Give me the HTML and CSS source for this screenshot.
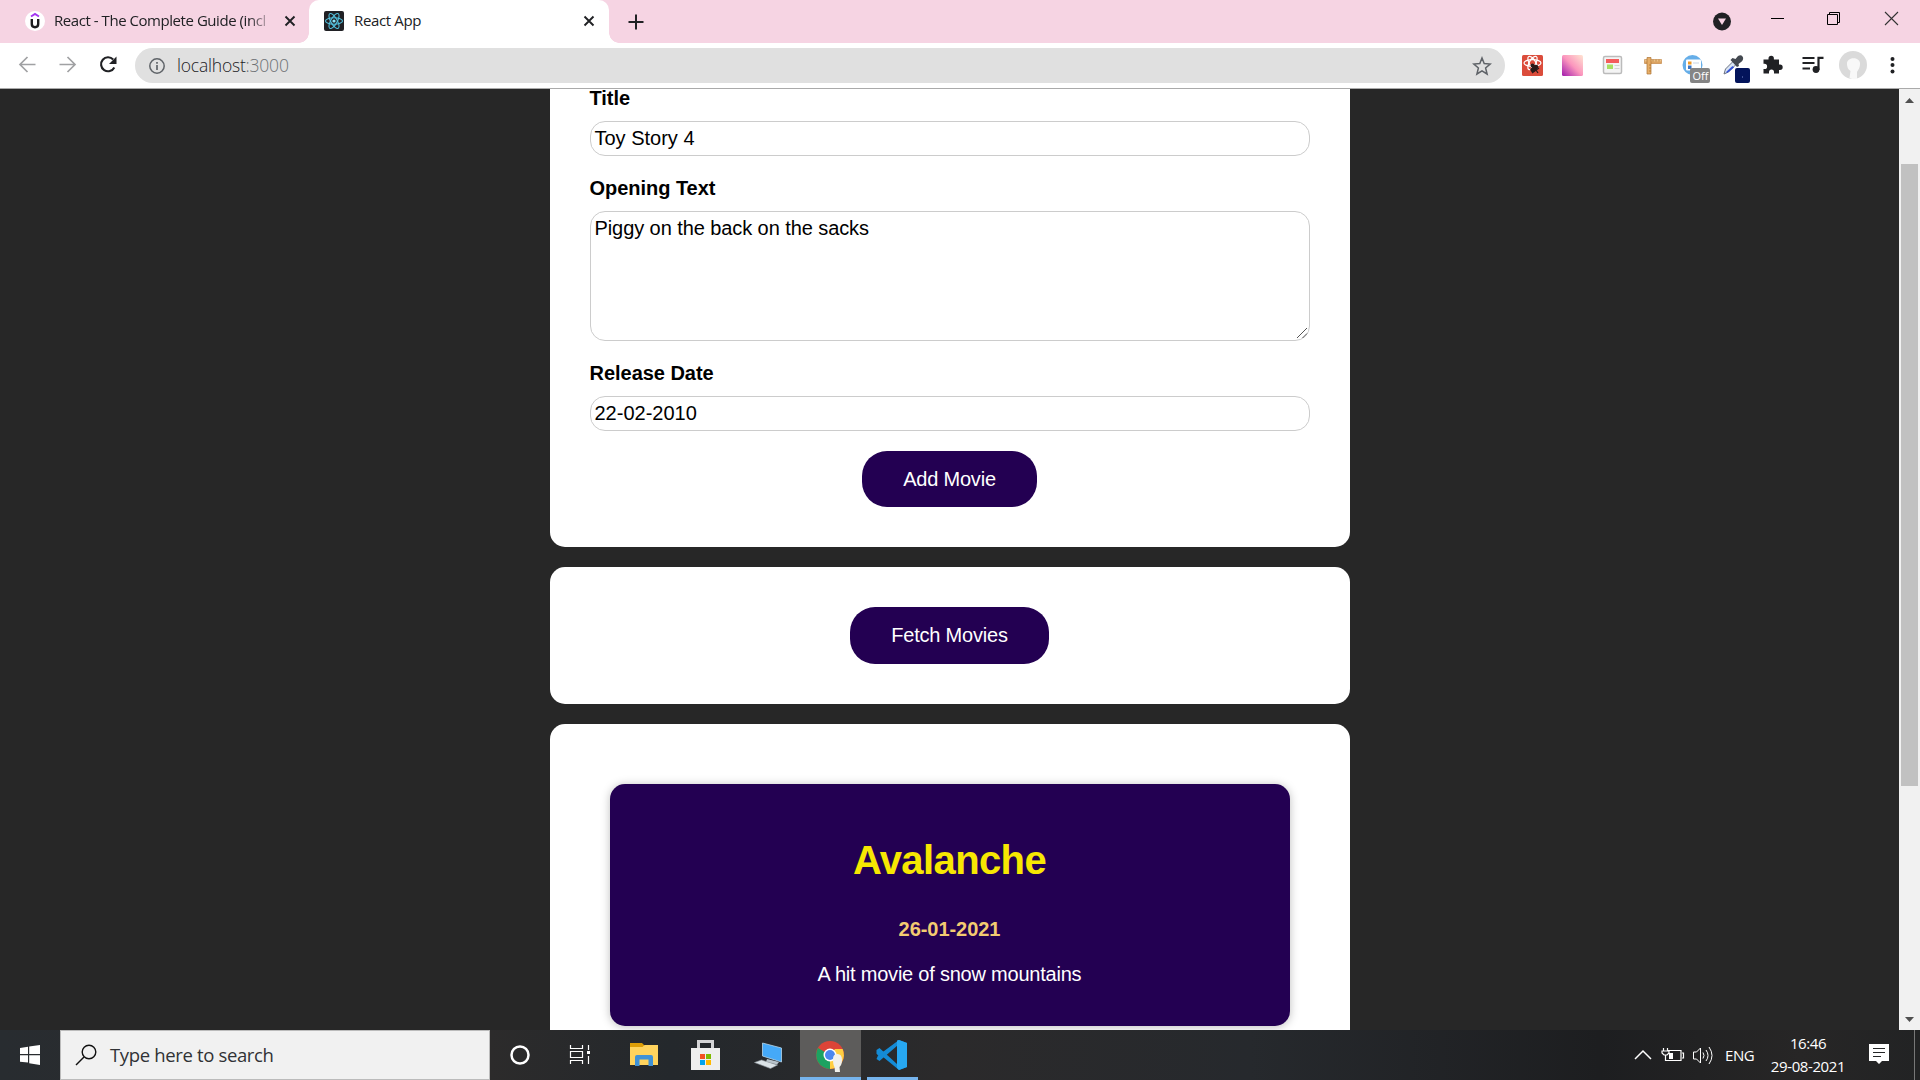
FILE: index.html
```html
<!DOCTYPE html>
<html lang="en">
<head>
<meta charset="utf-8">
<title>React App</title>
<link rel="stylesheet" href="styles.css">
</head>
<body>
<header class="tabs">
  <div class="tab tab-back">
    <svg class="fav" width="20" height="20" viewBox="0 0 20 20"><circle cx="10" cy="10" r="10" fill="#fff"/><path d="M6 5.500l4-2.600 4 2.600" fill="none" stroke="#a435f0" stroke-width="2"/><path d="M6.800 8v5q0 3.200 3.200 3.200t3.200-3.200V8" fill="none" stroke="#1c1d1f" stroke-width="2.400"/></svg>
    <span class="tab-title tab-fade">React - The Complete Guide (incl</span>
    <svg class="close" width="12" height="12" viewBox="0 0 12 12"><path d="M1.500 1.500l9 9M10.500 1.500l-9 9" stroke="#202124" stroke-width="1.900"/></svg>
  </div>
  <div class="tab tab-active">
    <svg class="fav" width="20" height="20" viewBox="0 0 20 20"><rect width="20" height="20" rx="2" fill="#202024"/><g fill="none" stroke="#53c1de" stroke-width="1.100"><ellipse cx="10" cy="10" rx="8.500" ry="3.200"/><ellipse cx="10" cy="10" rx="8.500" ry="3.200" transform="rotate(60 10 10)"/><ellipse cx="10" cy="10" rx="8.500" ry="3.200" transform="rotate(120 10 10)"/></g><circle cx="10" cy="10" r="1.600" fill="#8be4f7"/></svg>
    <span class="tab-title">React App</span>
    <svg class="close" width="12" height="12" viewBox="0 0 12 12"><path d="M1.500 1.500l9 9M10.500 1.500l-9 9" stroke="#202124" stroke-width="1.900"/></svg>
  </div>
  <svg class="plus" width="16" height="16" viewBox="0 0 16 16"><path d="M8 .5v15M.5 8h15" stroke="#202124" stroke-width="2"/></svg>
  <div class="window-controls">
    <svg width="200" height="43" viewBox="0 0 200 43"><circle cx="22" cy="21.500" r="9" fill="#202124"/><path d="M18 18.500h8l-4 6.500z" fill="#f6d4e3"/><path d="M71 18.500h13" stroke="#000"/><path d="M127.500 14.500h10v10h-10zM129.500 14v-1.500h10v10H138" fill="none" stroke="#000"/><path d="M185 12l13 13M198 12l-13 13" stroke="#333" stroke-width="1.100"/></svg>
  </div>
</header>
<div class="toolbar">
  <svg width="135" height="45" viewBox="0 0 135 45" fill="none"><path d="M35.500 21.500H20.500M27.500 14L20 21.500l7.500 7.500M59.500 21.500h15M67.500 14l7.500 7.500-7.500 7.500" stroke="#a0a1a3" stroke-width="1.700"/><path d="M113.200 16.500A7 7 0 1 0 114.300 24.500" stroke="#202124" stroke-width="2.100"/><path d="M116.500 13.500v7.500H109z" fill="#202124"/></svg>
  <div class="address">
    <svg width="18" height="18" viewBox="0 0 18 18"><circle cx="9" cy="9" r="7.200" fill="none" stroke="#5f6368" stroke-width="1.500"/><path d="M9 8v5M9 5v1.800" stroke="#5f6368" stroke-width="1.700"/></svg>
    <span class="url">localhost<span class="port">:3000</span></span>
    <svg class="star" width="20" height="20" viewBox="0 0 20 20"><path d="M10 2l2.200 5.600 6 .5-4.600 3.900 1.500 6L10 14.800 4.900 18l1.500-6L1.800 8.100l6-.5z" fill="none" stroke="#5f6368" stroke-width="1.500"/></svg>
  </div>
  <svg class="extensions" width="415" height="45" viewBox="0 0 415 45">
    <defs>
      <linearGradient id="grad" x1="0" y1="1" x2="1" y2="0"><stop stop-color="#a01aad"/><stop offset=".5" stop-color="#fb96bd"/><stop offset="1" stop-color="#ffe5d2"/></linearGradient>
      <linearGradient id="wood" x2="0" y2="1"><stop stop-color="#f5d09a"/><stop offset="1" stop-color="#d4944e"/></linearGradient>
    </defs>
    <rect x="17" y="12" width="21" height="21" rx="1.500" fill="#db4c3b"/>
    <g fill="none" stroke="#fff" stroke-width="1.200"><ellipse cx="27.500" cy="20" rx="8.500" ry="3.300"/><ellipse cx="27.500" cy="20" rx="7.500" ry="3.200" transform="rotate(60 27.500 20)"/><ellipse cx="27.500" cy="20" rx="7.500" ry="3.200" transform="rotate(120 27.500 20)"/></g>
    <ellipse cx="29.500" cy="25.500" rx="2.600" ry="4.500" transform="rotate(45 29.500 25.500)" fill="#2a1b1a"/><circle cx="27.500" cy="22.500" r="2" fill="#2a1b1a"/><path d="M25.500 27l5-5M27 30l7-5M29 24l4 6" stroke="#2a1b1a" stroke-width="1.300"/>
    <rect x="57" y="12" width="21" height="21" rx="1.500" fill="url(#grad)"/>
    <rect x="98.500" y="13.500" width="18" height="17" rx="1.500" fill="#f4f4f4" stroke="#bbb" stroke-width="1.500"/><path d="M101 16h13v4h-13z" fill="#f45c5c"/><path d="M102 21.500h6V26h-6z" fill="#a8df62"/><path d="M109.500 22.500h5m-5 3h5" stroke="#d4d4d4"/>
    <path d="M139.500 16.500h17v4h-17z" fill="url(#wood)" stroke="#bd7e3a" stroke-width=".6"/><path d="M142 14.500h4V31h-4z" fill="#e6ae68" stroke="#ad7435" stroke-width=".7"/><path d="M148 16.500v2m3-2v2m3-2v2M144 22h2m-2 3h2m-2 3h2" stroke="#a3651f" stroke-width=".6"/>
    <circle cx="187.500" cy="22" r="10" fill="#66aee8"/><rect x="181" y="16.500" width="15" height="11" rx="1" fill="#fff"/><path d="M183 18.500h3.500v3H183z" fill="#f09a27"/><path d="M183 22.500h3.500V26H183z" fill="#3c75c4"/><path d="M188 20h6" stroke="#c8d5e4"/><rect x="185" y="25" width="20" height="15" rx="2" fill="#858585"/><text class="off" x="187.500" y="37">Off</text>
    <path d="M219 31l1.500-5 8-8 3 3-8 8z" fill="#d9e5f4" stroke="#6b7282"/><path d="M220.500 29.500l7-6.500 1.500 1.500-6 5z" fill="#3554d8"/><path d="M225.500 17l2-2 3 1 2.500-3q3-1.500 4.500.5t-.5 4.700L233.500 21l.5 2-2 1z" fill="#444950"/><rect x="230" y="25" width="15" height="15" rx="2" fill="#03145b"/><path d="M237 34h1" stroke="#7a8acc"/>
    <path d="M258.500 16.500h5v-1a2.700 2.700 0 0 1 5.400 0v1h5.100v5h1a2.700 2.700 0 0 1 0 5.400h-1V30.500h-5V29a2.500 2.500 0 0 0-5 0v1.500h-5.500V26h1a2.600 2.600 0 0 0 0-5.200h-1z" fill="#202124"/>
    <path d="M297.500 15h12M297.500 20h12M297.500 25.500h7.500" stroke="#202124" stroke-width="2"/><path d="M313.500 27V14.800h5" stroke="#202124" stroke-width="2.200" fill="none"/><circle cx="311" cy="26.500" r="3.400" fill="#202124"/>
    <circle cx="348" cy="22" r="14" fill="#dadada"/><path d="M344.500 35l1-7q-4-3-3.500-8c.6-6.500 12.500-6.500 13 0 .2 5-2 7-3 9v7q-4 .8-7.500-1z" fill="#f8f8f8"/>
    <g fill="#202124"><circle cx="387.500" cy="16" r="2"/><circle cx="387.500" cy="22" r="2"/><circle cx="387.500" cy="28.500" r="2"/></g>
  </svg>
</div>
<div class="viewport">
  <main class="page">
    <section class="card form-card">
      <div class="label">Title</div><div class="field">Toy Story 4</div>
      <div class="label">Opening Text</div>
      <div class="field area">Piggy on the back on the sacks<svg class="grip" width="12" height="12" viewBox="0 0 12 12"><path d="M1 11L11 1M6.500 11L11 6.500" stroke="#555"/></svg></div>
      <div class="label">Release Date</div><div class="field">22-02-2010</div>
      <button class="button add">Add Movie</button>
    </section>
    <section class="card fetch-card"><button class="button fetch">Fetch Movies</button></section>
    <section class="card list-card">
      <article class="movie"><h2>Avalanche</h2><h3>26-01-2021</h3><p>A hit movie of snow mountains</p></article>
    </section>
  </main>
  <div class="scrollbar">
    <svg width="21" height="24" viewBox="0 0 21 24"><path d="M6 13l4.500-5 4.500 5z" fill="#505050"/></svg>
    <div class="thumb"></div>
    <svg class="down" width="21" height="24" viewBox="0 0 21 24"><path d="M6 11l4.500 5 4.500-5z" fill="#505050"/></svg>
  </div>
</div>
<footer class="taskbar">
  <div class="start"><svg width="20" height="20" viewBox="0 0 20 20"><path d="M0 3l8-1.200V9H0zM9.200 1.500L20 0v9H9.200zM0 10.200h8v7.400L0 16.800zM9.200 10.200H20V20L9.200 18.200z" fill="#fff"/></svg></div>
  <div class="search"><svg width="22" height="22" viewBox="0 0 22 22"><circle cx="14" cy="8" r="6.800" fill="none" stroke="#111" stroke-width="1.400"/><path d="M9 13l-8 8" stroke="#111" stroke-width="1.400"/></svg><span>Type here to search</span></div>
  <svg class="apps" width="450" height="50" viewBox="0 0 450 50">
    <rect x="310" width="61" height="47" fill="#5d5c5b"/><path d="M310 47h61v3h-61zM377 47h51v3h-51z" fill="#76b4ed"/>
    <circle cx="30" cy="25" r="8.500" fill="none" stroke="#fff" stroke-width="2.500"/>
    <path d="M80.500 15v3.500h12V15M80.500 34v-3.500h12V34M80.500 21.500h12v6h-12zM98.500 15v5M98.500 26v8" fill="none" stroke="#fff" stroke-width="1.200"/><path d="M97 21h3v3h-3z" fill="#fff"/>
    <path d="M140 13h12l2 2v3h-14z" fill="#dd9d06"/><path d="M140 17h12.500l2-2H168v20h-28z" fill="#ffd35d"/><path d="M145 36V27q0-2 2-2h14q2 0 2 2v9h-4.500v-6.500h-9V36z" fill="#3f91d6"/>
    <path d="M208.500 19v-7.500h14V19" fill="none" stroke="#d4d4d6" stroke-width="3"/><path d="M201 18h29v22h-29z" fill="#eee"/><path d="M210 24h5v5h-5z" fill="#f25022"/><path d="M216 24h5v5h-5z" fill="#7fba00"/><path d="M210 30h5v5h-5z" fill="#00a4ef"/><path d="M216 30h5v5h-5z" fill="#ffb900"/>
    <path d="M272.500 13l19 5v14l-19-6z" fill="#45a9f8" stroke="#b8d6e8" stroke-width=".8"/><path d="M277 29l12 3-2 2.500-11-2.500z" fill="#b8c3ca"/><path d="M264.500 32.500l7-2.500 16 5-7 3.500z" fill="#dbe3e7" stroke="#91999f" stroke-width=".6"/>
    <circle cx="340" cy="25" r="14" fill="#dc4437"/><path d="M340 25l-12-7a14 14 0 0 0 12 21z" fill="#1ca261"/><path d="M340 25l5-6h7.600A14 14 0 0 1 340 39z" fill="#ffce42"/><circle cx="340" cy="25" r="6.500" fill="#fff"/><circle cx="340" cy="25" r="5" fill="#4b87ee"/><path d="M343 29q0-5 4.500-5t4.500 6q0 5-2.500 7l.5 5h-5l-.5-5q-1.500-2-1.500-8z" fill="#f1f1ed"/>
    <path d="M409 10l8 3v24l-8 3-19-15.500-2 .7-1.500-1.500V20l3-2 18 16.500v-19L389.500 31l-3-2 1.500-3.500z" fill="#148bd6"/><path d="M407 10.500l2-.5 8 3v24l-8 3-2-2z" fill="#27a8f2"/>
  </svg>
  <div class="tray">
    <svg width="84" height="50" viewBox="0 0 84 50" fill="none" stroke="#fff"><path d="M2 29l8-8 8 8" stroke-width="1.500"/><path d="M34 20.500h14v10H34M49 23h1.500v5H49M30.500 18v3M34.500 18v3M29 21h7v2l-2 2h-3l-2-2zM32.500 25v5.500H35" stroke-width="1.200"/><path d="M36 23h4v6h-4z" fill="#fff" stroke="none"/><path d="M60.500 22h3l4-4v15l-4-4h-3z"/><path d="M70 22.500q2 3 0 6M73 20q4 5.500 0 11M76 17q6 8.500 0 17"/></svg>
    <span class="lang">ENG</span><div class="clock"><span>16:46</span><span>29-08-2021</span></div>
    <svg class="notice" width="20" height="22" viewBox="0 0 20 22"><path d="M0 0h20v17h-7l-3 3-3-3H0z" fill="#fff"/><path d="M4 4.500h12M4 8.500h12M4 12.500h8" stroke="#242526" stroke-width="1.200"/></svg>
    <div class="show-desktop"></div>
  </div>
</footer>
</body>
</html>
```
FILE: styles.css
```css
* { box-sizing: border-box; }
body { margin: 0; width: 1920px; height: 1080px; overflow: hidden; display: flex; flex-direction: column; font-family: "Open Sans", "Noto Sans", sans-serif; }
svg { display: block; flex: none; }
.tabs { height: 43px; background: #f6d4e3; display: flex; align-items: center; }
.tab { height: 43px; display: flex; align-items: center; flex: none; }
.tab-back { width: 309px; padding: 0 13px 1px 25px; }
.tab-active { position: relative; width: 300px; padding: 0 14px 1px 15px; background: #fff; border-radius: 10px 10px 0 0; }
.tab-active::before, .tab-active::after { content: ""; position: absolute; bottom: 0; width: 10px; height: 10px; }
.tab-active::before { left: -10px; background: radial-gradient(circle at 0 0, transparent 9.5px, #fff 10px); }
.tab-active::after { right: -10px; background: radial-gradient(circle at 100% 0, transparent 9.5px, #fff 10px); }
.tab-title { margin: 0 0 2px 10px; font-size: 15px; letter-spacing: -0.35px; color: #202124; white-space: nowrap; }
.tab-fade { width: 216px; margin-left: 9px; overflow: hidden; letter-spacing: -0.45px; mask-image: linear-gradient(90deg, #000 90%, rgba(0,0,0,.15)); }
.close { margin-left: auto; }
.plus { margin-left: 19px; }
.window-controls { margin-left: auto; width: 220px; }
.toolbar { height: 46px; background: #fff; border-bottom: 1px solid #aaa; display: flex; align-items: flex-start; }
.address { width: 1370px; height: 35px; margin-top: 5px; padding: 0 13px; border-radius: 18px; background: #e0e0e0; display: flex; align-items: center; }
.url { margin: 0 0 1px 11px; font-size: 17.5px; font-weight: 300; letter-spacing: -0.2px; color: #202124; }
.port { color: #6d7074; }
.star { margin-left: auto; }
.off { font: 11px "Open Sans", sans-serif; fill: #fff; }
.viewport { height: 941px; display: flex; overflow: hidden; background: #272727; font-family: "Liberation Sans", Arial, sans-serif; }
.page { width: 1899px; display: flex; flex-direction: column; align-items: center; gap: 20px; }
.card { width: 800px; flex: none; background: #fff; border-radius: 15px; padding: 40px; }
.form-card { height: 458px; padding-top: 0; border-radius: 0 0 15px 15px; display: flex; flex-direction: column; }
.label { height: 25px; line-height: 25px; margin-bottom: 10px; font-size: 20px; font-weight: 700; letter-spacing: -0.03px; }
.label:first-child { height: 22px; line-height: 19px; }
.field { height: 35px; margin-bottom: 20px; border: 1px solid #ccc; border-radius: 15px; padding: 5px 4px; font-size: 20px; line-height: 23px; flex: none; }
.area { position: relative; height: 130px; letter-spacing: -0.08px; }
.grip { position: absolute; right: 1px; bottom: 1px; }
.button { height: 56px; padding: 0; border: 0; border-radius: 25px; background: #230052; color: #fff; font: 20px "Liberation Sans", Arial, sans-serif; letter-spacing: -0.2px; }
.add { width: 175px; margin: 0 auto; flex: none; }
.fetch-card { height: 137px; display: flex; justify-content: center; }
.fetch { width: 199px; height: 57px; }
.list-card { height: 400px; padding: 60px; }
.movie { height: 242px; border-radius: 15px; background: #230052; color: #fff; text-align: center; box-shadow: 0 1px 10px rgba(0,0,0,.26); padding-top: 53px; }
.movie h2 { margin: 0; font-size: 40px; line-height: 46px; letter-spacing: -0.6px; color: #f7e702; }
.movie h3 { margin: 35px 0 22px; font-size: 20px; line-height: 23px; letter-spacing: -0.05px; color: #f3cb71; }
.movie p { margin: 0; font-size: 20px; line-height: 23px; letter-spacing: -0.22px; }
.scrollbar { width: 21px; background: #f1f1f1; display: flex; flex-direction: column; padding-top: 1px; }
.thumb { width: 17px; height: 622px; margin: 50px 0 0 2px; background: #c1c1c1; }
.down { margin-top: auto; }
.taskbar { height: 50px; display: flex; color: #fff; background: linear-gradient(90deg, #282c30 0, #2c2b2b 490px, #24282c 670px, #2b2a2b 950px, #26292d 1250px, #1d1e20 1600px, #272626 1800px, #222324 1920px); }
.start { width: 60px; display: flex; align-items: center; justify-content: center; }
.search { width: 430px; border: 1px solid #bbb; background: #f1f1f1; color: #303235; display: flex; align-items: center; padding-left: 14px; font-size: 18.5px; letter-spacing: -0.35px; }
.search span { margin: 0 0 2px 13px; }
.tray { width: 287px; margin-left: auto; display: flex; align-items: center; }
.lang { margin-left: 8px; font-size: 15px; letter-spacing: -0.4px; width: 30px; }
.clock { width: 78px; margin-left: 14px; display: flex; flex-direction: column; align-items: center; font-size: 15px; line-height: 23px; letter-spacing: -0.4px; }
.notice { margin-left: 22px; }
.show-desktop { width: 1px; height: 50px; margin: 0 5px 0 auto; background: #777; }
```
